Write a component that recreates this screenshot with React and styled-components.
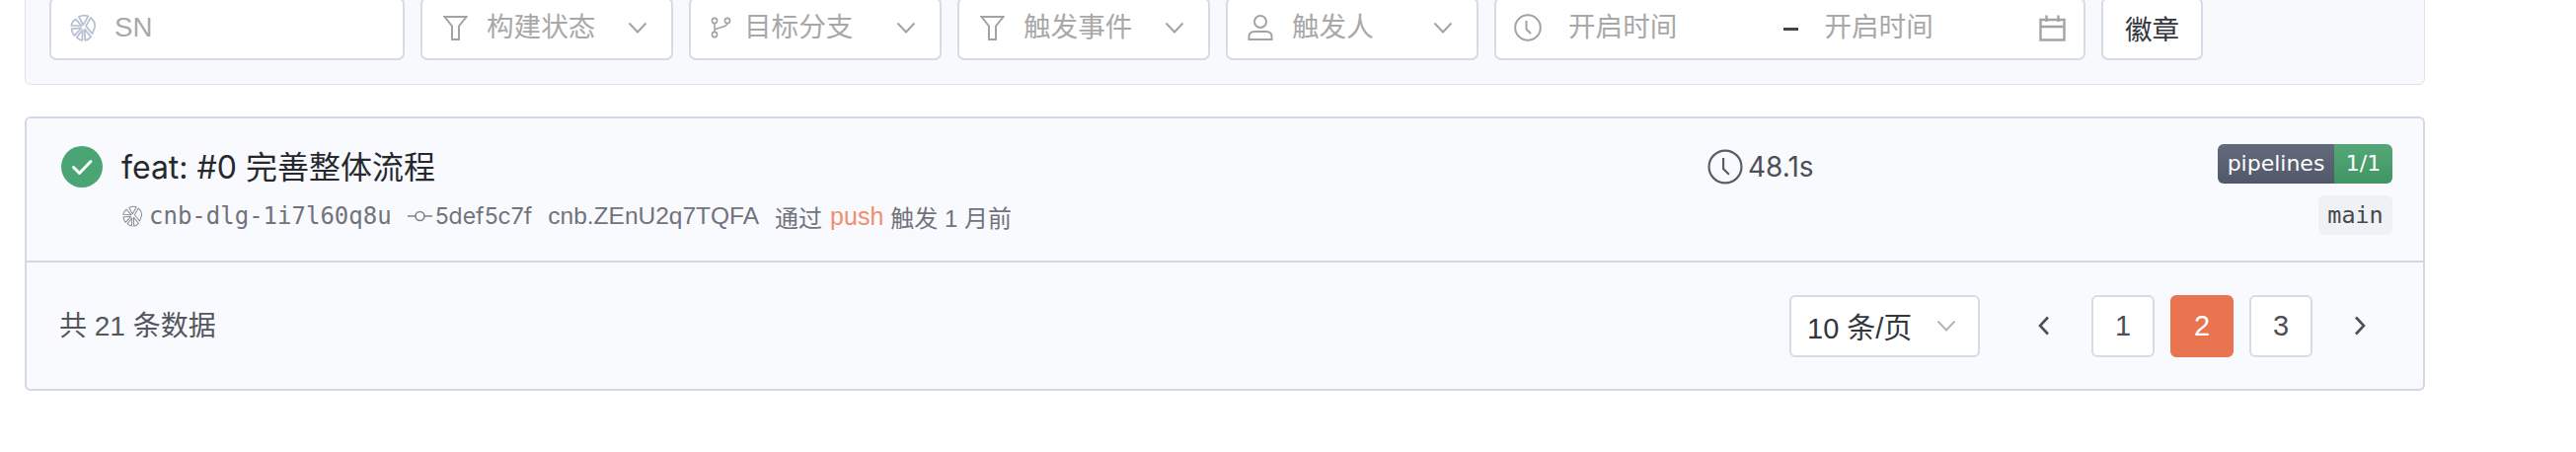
import React from "react";
import styled, { createGlobalStyle } from "styled-components";

const CJK = '"Noto Sans CJK SC", sans-serif';
const Global = createGlobalStyle`
  html, body { margin: 0; padding: 0; background: #fff; overflow: hidden; }
  body { width: 2610px; height: 458px; font-family: "Liberation Sans", ${CJK}; }
`;

const Page = styled.div`
  width: 2432px;
  margin-left: 25px;
  margin-top: -40px;
  display: flex;
  flex-direction: column;
  gap: 32px;
`;
const FilterPanel = styled.div`
  box-sizing: border-box;
  height: 126px;
  background: #f7f9fd;
  border: 1px solid #e0e3ee;
  border-radius: 6px;
  padding: 36px 24px 0;
  display: grid;
  grid-template-columns: 360px 256px 256px 256px 256px 599px 103px;
  column-gap: 16px;
`;
const Field = styled.div`
  box-sizing: border-box;
  height: 64px;
  background: #fff;
  border: 2px solid #d6dbe8;
  border-radius: 7px;
  display: flex;
  align-items: center;
  padding: 0 ${(p) => p.$right ?? 24}px 2px ${(p) => p.$left ?? 21}px;
  gap: ${(p) => p.$gap ?? 19}px;
  font-size: 27.6px;
  line-height: 36px;
  color: #a8a8a8;
  white-space: nowrap;
`;
const Caret = styled.svg`
  margin-left: auto;
  width: 20px;
  height: 12px;
  flex: none;
`;
const DateText = styled.span`
  margin-left: ${(p) => p.$left}px;
`;
const Dash = styled.span`
  margin: 2px 0 0 108px;
  width: 15px;
  height: 3px;
  background: #444;
  flex: none;
`;
const CalIcon = styled.svg`
  margin-left: auto;
  flex: none;
`;
const BadgeButton = styled.button`
  box-sizing: border-box;
  height: 64px;
  background: #fff;
  border: 2px solid #d6dbe8;
  border-radius: 7px;
  font: 27.6px "Liberation Sans", ${CJK};
  color: #33363d;
  padding: 0 0 3px;
`;
const Card = styled.div`
  box-sizing: border-box;
  height: 278px;
  background: #f9fafe;
  border: 2px solid #d3d8e5;
  border-radius: 6px;
  display: flex;
  flex-direction: column;
`;
const Row = styled.div`
  height: 146px;
  flex: none;
  box-sizing: border-box;
  border-bottom: 2px solid #d3d8e5;
  padding: 28px 31px 0 35px;
  display: grid;
  grid-template-columns: 1668px 1fr auto;
  align-items: start;
`;
const MainCol = styled.div`
  display: flex;
  flex-direction: column;
  gap: 13px;
`;
const TitleLine = styled.div`
  display: flex;
  align-items: center;
  gap: 19px;
  height: 42px;
`;
const Title = styled.span`
  padding-bottom: 5px;
  font: 400 32px Inter, ${CJK};
  color: #26282d;
`;
const MetaLine = styled.div`
  display: flex;
  align-items: center;
  height: 32px;
  margin-left: 61px;
  font-size: 24px;
  color: #70737b;
  white-space: nowrap;
`;
const Mono = styled.span`
  font-family: "DejaVu Sans Mono", monospace;
  font-size: 24px;
  margin-left: 6px;
`;
const Hash = styled.span`
  font-family: Inter, sans-serif;
  font-size: 23px;
  margin-left: 3px;
`;
const CommitIcon = styled.svg`
  margin-left: 16px;
  flex: none;
`;
const Spaced = styled.span`
  margin-left: ${(p) => p.$left}px;
`;
const Wide = styled(Spaced)`
  font-size: 24.5px;
`;
const Push = styled.span`
  color: #f18e6e;
  font-size: 25px;
  margin: 0 7px 0 8px;
`;
const Duration = styled.div`
  display: flex;
  align-items: center;
  gap: 5px;
  height: 42px;
  font: 28px Inter, sans-serif;
  color: #4c4f57;
`;
const RightCol = styled.div`
  display: flex;
  flex-direction: column;
  align-items: flex-end;
  gap: 12px;
  margin-top: -2px;
`;
const Badge = styled.div`
  display: flex;
  height: 40px;
  border-radius: 6px;
  overflow: hidden;
  color: #fff;
  font: 22px/40px "DejaVu Sans", sans-serif;
`;
const BadgeLabel = styled.span`
  width: 118px;
  text-align: center;
  background: linear-gradient(#626a7c, #515869);
`;
const BadgeValue = styled.span`
  width: 59px;
  text-align: center;
  background: linear-gradient(#56a778, #3f9562);
`;
const BranchTag = styled.span`
  height: 40px;
  width: 75px;
  text-align: center;
  border-radius: 6px;
  background: #f0f1f5;
  color: #44474e;
  font: 23.4px/40px "DejaVu Sans Mono", monospace;
`;
const Footer = styled.div`
  flex: 1;
  display: flex;
  align-items: center;
  justify-content: space-between;
  padding: 0 32px 0 33px;
`;
const Total = styled.span`
  padding-bottom: 4px;
  font-size: 28px;
  color: #53565d;
`;
const Pager = styled.div`
  display: flex;
  align-items: center;
  gap: 16px;
`;
const SizeSelect = styled.div`
  box-sizing: border-box;
  width: 193px;
  height: 63px;
  margin-right: 17px;
  background: #fff;
  border: 2px solid #d6dbe8;
  border-radius: 6px;
  display: flex;
  align-items: center;
  padding: 0 22px 0 16px;
  font-size: 29px;
  color: #33363d;
  white-space: nowrap;
`;
const NavButton = styled.div`
  width: 64px;
  height: 63px;
  display: flex;
  align-items: center;
  justify-content: center;
`;
const PageButton = styled.div`
  box-sizing: border-box;
  width: 64px;
  height: 63px;
  border-radius: 6px;
  display: flex;
  align-items: center;
  justify-content: center;
  font-size: 29px;
  background: ${(p) => (p.$active ? "#e97550" : "#fff")};
  color: ${(p) => (p.$active ? "#fff" : "#4c4f57")};
  border: 2px solid ${(p) => (p.$active ? "#e97550" : "#d6dbe8")};
`;

const Logo = ({ size, color, width = 1.5 }) => (
  <svg width={size} height={size} viewBox="0 0 24 24" fill="none" stroke={color} strokeWidth={width} strokeLinejoin="round" style={{ flex: "none" }}>
    <path d="M8.5 2.6C11 1.2 14 1 16.6 2L12.4 9.6Z" />
    <path d="M5.6 4.6L11 10.4 2 10.2C2.2 8 3.6 6 5.6 4.6Z" />
    <path d="M2.2 13L10.6 12.4 4.6 19C3.2 17.4 2.4 15.2 2.2 13Z" />
    <path d="M6.6 20.4L11.8 14 11.4 23C9.6 22.8 8 21.8 6.6 20.4Z" />
    <path d="M13.6 13.4L19 20C17.6 21.6 15.6 22.8 13.8 23Z" />
    <path d="M18.8 3.4C21.2 5.2 22.6 8.4 22.4 11.4L20.2 17.4 14.6 10.6Z" />
  </svg>
);
const Funnel = () => (
  <svg width="25" height="27" viewBox="0 0 25 27" fill="none" stroke="#a3a3a3" strokeWidth="2" style={{ flex: "none" }}>
    <path d="M1.5 2h22l-7.5 9.5V25H9V11.5Z" />
  </svg>
);
const Branch = () => (
  <svg width="21" height="22" viewBox="0 0 21 22" fill="none" stroke="#a3a3a3" strokeWidth="1.6" style={{ flex: "none" }}>
    <circle cx="4" cy="4" r="2.6" />
    <circle cx="17" cy="4" r="2.6" />
    <circle cx="4" cy="18" r="2.6" />
    <path d="M4 6.6V15.4M17 6.6C17 11 8 10.5 4 13" />
  </svg>
);
const Person = () => (
  <svg width="26" height="28" viewBox="0 0 26 28" fill="none" stroke="#a3a3a3" strokeWidth="2" style={{ flex: "none" }}>
    <circle cx="13" cy="8" r="6" />
    <path d="M1.5 26v-3.5c0-3 3-4.5 6-4.5h11c3 0 6 1.500 6 4.500V26Z" />
  </svg>
);
const Chevron = ({ color = "#a3a3a3" }) => (
  <Caret viewBox="0 0 20 12" fill="none" stroke={color} strokeWidth="2">
    <path d="M1.500 1.500L10 10.500 18.500 1.500" />
  </Caret>
);
const Clock = ({ size, color, width }) => (
  <svg width={size} height={size} viewBox="0 0 28 28" fill="none" stroke={color} strokeWidth={width} style={{ flex: "none" }}>
    <circle cx="14" cy="14" r="12.800" />
    <path d="M12.500 7V15.500L17 20" />
  </svg>
);
const Calendar = () => (
  <CalIcon width="27" height="27" viewBox="0 0 27 27" fill="none" stroke="#a3a3a3" strokeWidth="2.400">
    <path d="M1.500 5h24v20.500h-24ZM1.500 12h24M7.500 0.500V7M19.500 0.500V7" />
  </CalIcon>
);

const filters = [
  { icon: <Funnel />, label: "构建状态" },
  { icon: <Branch />, label: "目标分支", left: 20, gap: 13 },
  { icon: <Funnel />, label: "触发事件" },
  { icon: <Person />, label: "触发人", left: 20 },
];

export default function App() {
  return (
    <>
      <Global />
      <Page>
        <FilterPanel>
          <Field $gap={18} $left={18}>
            <Logo size={28} color="#b9c0d2" />
            <span>SN</span>
          </Field>
          {filters.map((f) => (
            <Field key={f.label} $left={f.left} $gap={f.gap}>
              {f.icon}
              <span>{f.label}</span>
              <Chevron />
            </Field>
          ))}
          <Field $left={18} $right={18} $gap={0}>
            <Clock size={28} color="#a3a3a3" width="2" />
            <DateText $left={27}>开启时间</DateText>
            <Dash />
            <DateText $left={26}>开启时间</DateText>
            <Calendar />
          </Field>
          <BadgeButton>徽章</BadgeButton>
        </FilterPanel>
        <Card>
          <Row>
            <MainCol>
              <TitleLine>
                <svg width="42" height="42" viewBox="0 0 42 42" style={{ flex: "none" }}>
                  <circle cx="21" cy="21" r="21" fill="#4aa574" />
                  <path d="M12.500 21.500L18.500 27.500 30 15.500" fill="none" stroke="#fff" strokeWidth="3" strokeLinecap="round" strokeLinejoin="round" />
                </svg>
                <Title>feat: #0 完善整体流程</Title>
              </TitleLine>
              <MetaLine>
                <Logo size={22} color="#8a8d95" width="1.1" />
                <Mono>cnb-dlg-1i7l60q8u</Mono>
                <CommitIcon width="25" height="12" viewBox="0 0 25 12" fill="none" stroke="#7d8088" strokeWidth="1.600">
                  <circle cx="12.500" cy="6" r="4.500" />
                  <path d="M0 6H8M17 6H25" />
                </CommitIcon>
                <Hash>5def5c7f</Hash>
                <Wide $left={16}>cnb.ZEnU2q7TQFA</Wide>
                <Spaced $left={16}>通过</Spaced>
                <Push>push</Push>
                <span>触发 1 月前</span>
              </MetaLine>
            </MainCol>
            <Duration>
              <Clock size={36} color="#5a5d65" width="1.700" />
              48.1s
            </Duration>
            <RightCol>
              <Badge>
                <BadgeLabel>pipelines</BadgeLabel>
                <BadgeValue>1/1</BadgeValue>
              </Badge>
              <BranchTag>main</BranchTag>
            </RightCol>
          </Row>
          <Footer>
            <Total>共 21 条数据</Total>
            <Pager>
              <SizeSelect>
                10 条/页
                <Chevron color="#b5b5b5" />
              </SizeSelect>
              <NavButton>
                <svg width="12" height="20" viewBox="0 0 12 20" fill="none" stroke="#4c4f57" strokeWidth="2.600">
                  <path d="M10 1.500L2 10 10 18.500" />
                </svg>
              </NavButton>
              <PageButton>1</PageButton>
              <PageButton $active>2</PageButton>
              <PageButton>3</PageButton>
              <NavButton>
                <svg width="12" height="20" viewBox="0 0 12 20" fill="none" stroke="#4c4f57" strokeWidth="2.600">
                  <path d="M2 1.500L10 10 2 18.500" />
                </svg>
              </NavButton>
            </Pager>
          </Footer>
        </Card>
      </Page>
    </>
  );
}
